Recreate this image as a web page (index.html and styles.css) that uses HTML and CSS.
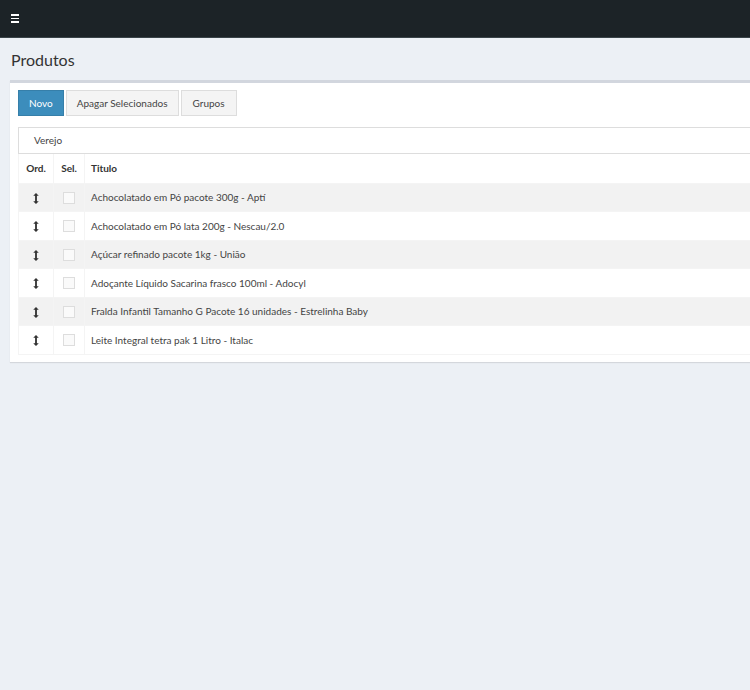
FILE: index.html
```html
<!DOCTYPE html>
<html lang="pt-BR">
  <head>
    <meta charset="UTF-8" />
    <meta name="viewport" content="width=device-width, initial-scale=1.0" />
    <title>Produtos</title>
    <link rel="stylesheet" href="styles.css">
  </head>
  <body>
    <header class="navbar">
      <span class="menu-toggle"><i></i><i></i><i></i></span>
    </header>

    <section class="content-header">
      <h1>Produtos</h1>
    </section>

    <section class="content">
      <div class="box">
        <div class="toolbar">
          <button class="btn btn-primary">Novo</button>
          <button class="btn">Apagar Selecionados</button>
          <button class="btn">Grupos</button>
        </div>

        <div class="group-tab">Verejo</div>

        <table class="table">
          <thead>
            <tr>
              <th class="col-ord">Ord.</th>
              <th class="col-sel">Sel.</th>
              <th>Titulo</th>
            </tr>
          </thead>
          <tbody>
            <tr>
              <td class="col-ord"><svg class="move" viewBox="0 0 6 12"><path d="M3 0L6 3H4V9H6L3 12L0 9H2V3H0Z"/></svg></td>
              <td class="col-sel"><span class="check"></span></td>
              <td>Achocolatado em Pó pacote 300g - Aptí</td>
            </tr>
            <tr>
              <td class="col-ord"><svg class="move" viewBox="0 0 6 12"><path d="M3 0L6 3H4V9H6L3 12L0 9H2V3H0Z"/></svg></td>
              <td class="col-sel"><span class="check"></span></td>
              <td>Achocolatado em Pó lata 200g - Nescau/2.0</td>
            </tr>
            <tr>
              <td class="col-ord"><svg class="move" viewBox="0 0 6 12"><path d="M3 0L6 3H4V9H6L3 12L0 9H2V3H0Z"/></svg></td>
              <td class="col-sel"><span class="check"></span></td>
              <td>Açúcar refinado pacote 1kg - União</td>
            </tr>
            <tr>
              <td class="col-ord"><svg class="move" viewBox="0 0 6 12"><path d="M3 0L6 3H4V9H6L3 12L0 9H2V3H0Z"/></svg></td>
              <td class="col-sel"><span class="check"></span></td>
              <td>Adoçante Líquido Sacarina frasco 100ml - Adocyl</td>
            </tr>
            <tr>
              <td class="col-ord"><svg class="move" viewBox="0 0 6 12"><path d="M3 0L6 3H4V9H6L3 12L0 9H2V3H0Z"/></svg></td>
              <td class="col-sel"><span class="check"></span></td>
              <td>Fralda Infantil Tamanho G Pacote 16 unidades - Estrelinha Baby</td>
            </tr>
            <tr>
              <td class="col-ord"><svg class="move" viewBox="0 0 6 12"><path d="M3 0L6 3H4V9H6L3 12L0 9H2V3H0Z"/></svg></td>
              <td class="col-sel"><span class="check"></span></td>
              <td>Leite Integral tetra pak 1 Litro - Italac</td>
            </tr>
          </tbody>
        </table>
      </div>
    </section>
  </body>
</html>
```

FILE: styles.css
```css
* {
  margin: 0;
  padding: 0;
  box-sizing: border-box;
}

body {
  font-family: 'Lato', 'Open Sans', sans-serif;
  font-size: 10px;
  color: #444;
  background-color: #ecf0f5;
  min-height: 100vh;
}

.navbar {
  height: 38px;
  background-color: #1c2327;
  border-bottom: 1px solid #3a4449;
  display: flex;
  align-items: center;
  padding-left: 11px;
}

.menu-toggle {
  display: flex;
  flex-direction: column;
  gap: 2px;
  width: 8px;
}

.menu-toggle i {
  display: block;
  height: 1.5px;
  background-color: #fff;
}

.content-header {
  padding: 12px 11px 0;
  height: 42px;
}

.content-header h1 {
  font-size: 16px;
  font-weight: 400;
  color: #333;
}

.content {
  padding-left: 10px;
}

.box {
  background-color: #fff;
  border-top: 3px solid #d2d6de;
  box-shadow: 0 1px 1px rgba(0, 0, 0, 0.1);
  padding: 7px 0 7px 8px;
}

.toolbar {
  display: flex;
  gap: 2px;
  margin-bottom: 11px;
}

.btn {
  font-family: inherit;
  font-size: 10px;
  height: 26px;
  padding: 0 10px;
  background-color: #f4f4f4;
  border: 1px solid #ddd;
  color: #444;
  border-radius: 0;
}

.btn-primary {
  background-color: #3c8dbc;
  border-color: #367fa9;
  color: #fff;
}

.toolbar .btn:last-child {
  padding: 0 11px;
}

.group-tab {
  height: 27px;
  border: 1px solid #ddd;
  border-right: none;
  padding-left: 15px;
  line-height: 25px;
  color: #444;
}

.table {
  width: 100%;
  border-collapse: collapse;
  border-left: 1px solid #f4f4f4;
}

.table th,
.table td {
  text-align: left;
  padding: 0 6px;
  border-left: 1px solid #f4f4f4;
  border-bottom: 1px solid #f4f4f4;
  vertical-align: middle;
}

.table th {
  height: 29px;
  font-weight: 700;
  color: #333;
}

.table td {
  height: 28.5px;
}

.table tbody tr:nth-child(odd) {
  background-color: #f2f2f2;
}

.table .col-ord {
  width: 35px;
  text-align: center;
}

.table .col-sel {
  width: 31px;
  text-align: center;
}

.move {
  width: 6px;
  height: 11px;
  fill: #333;
  vertical-align: middle;
}

.check {
  display: inline-block;
  width: 12px;
  height: 12px;
  border: 1px solid #ddd;
  background-color: #fafafa;
  vertical-align: middle;
}
```
